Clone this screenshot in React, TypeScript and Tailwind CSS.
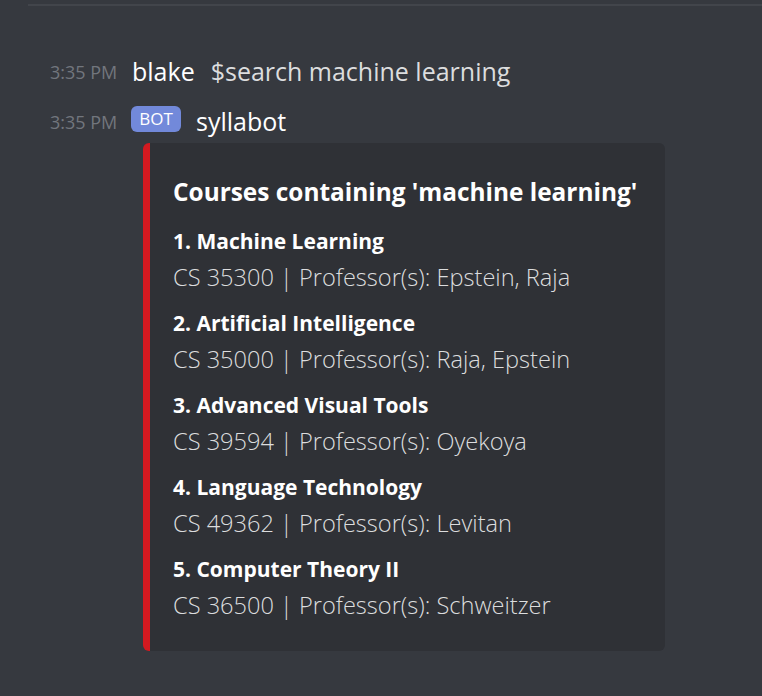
import React from "react";

const courses = [
  { t: "1. Machine Learning", d: "CS 35300 | Professor(s): Epstein, Raja" },
  { t: "2. Artificial Intelligence", d: "CS 35000 | Professor(s): Raja, Epstein" },
  { t: "3. Advanced Visual Tools", d: "CS 39594 | Professor(s): Oyekoya" },
  { t: "4. Language Technology", d: "CS 49362 | Professor(s): Levitan" },
  { t: "5. Computer Theory II", d: "CS 36500 | Professor(s): Schweitzer" },
];

export default function App() {
  return (
    <div
      className="w-[762px] h-[696px] bg-[#36393f] overflow-hidden"
      style={{ fontFamily: '"Open Sans", "Noto Sans", sans-serif' }}
    >
      <div className="pt-[4px] pl-[28px]">
        <div className="h-[2px] bg-[#42454b]" />
      </div>
      <div className="mt-[51px] flex items-center h-[30px]">
        <span className="w-[132px] pl-[50px] text-[18px] text-[#72767d]">3:35 PM</span>
        <span className="text-[25px] text-white font-medium">blake</span>
        <span className="ml-[16px] text-[25px] text-[#dcddde]">$search machine learning</span>
      </div>
      <div className="mt-[17px] flex items-center h-[30px]">
        <span className="mt-[6px] w-[131px] pl-[50px] text-[18px] text-[#72767d]">3:35 PM</span>
        <span className="h-[26px] w-[50px] rounded-[6px] bg-[#7289da] text-white text-[17px] flex items-center justify-center">BOT</span>
        <span className="mt-[6px] ml-[15px] text-[25px] text-white font-medium">syllabot</span>
      </div>
      <div className="mt-[9px] ml-[143px] w-[522px] rounded-[6px] bg-[#2f3136] border-l-[7px] border-[#d31920] pl-[23px] pt-[34px] pb-[31px]">
        <div className="text-[24.4px] leading-[30px] font-bold text-white">
          Courses containing 'machine learning'
        </div>
        <div className="mt-[19px] flex flex-col gap-[16px]">
          {courses.map((c) => (
            <div key={c.t}>
              <div className="text-[21px] leading-[30px] font-bold text-white">{c.t}</div>
              <div className="mt-[6px] text-[23.6px] leading-[30px] font-light text-[#dcddde]">{c.d}</div>
            </div>
          ))}
        </div>
      </div>
    </div>
  );
}
